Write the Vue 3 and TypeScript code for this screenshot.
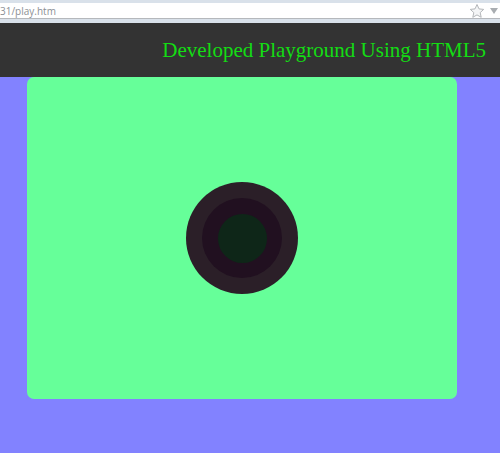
<script setup lang="ts">
const title = 'Developed Playground Using HTML5'
const url = '31/play.htm'
</script>

<template>
  <div class="page">
    <div class="chrome">
      <div class="address">
        <span class="url">{{ url }}</span>
        <span class="tools">
          <svg class="star" width="16" height="16" viewBox="0 0 16 16">
            <path d="M8 1.5l2 4.4 4.7.5-3.5 3.2 1 4.700L8 11.900l-4.200 2.400 1-4.700L1.300 6.400 6 5.900z" fill="#f4f5f6" stroke="#b4b7ba" stroke-width="1" />
          </svg>
          <svg class="caret" width="8" height="6" viewBox="0 0 8 6">
            <path d="M0 0h8L4 6z" fill="#a9adb1" />
          </svg>
        </span>
      </div>
    </div>
    <header class="bar">
      <h1 class="title">{{ title }}</h1>
    </header>
    <main class="stage">
      <div class="field">
        <div class="ring outer">
          <div class="ring middle">
            <div class="ring inner"></div>
          </div>
        </div>
      </div>
    </main>
  </div>
</template>

<style scoped>
.page {
  width: 500px;
  height: 453px;
  display: flex;
  flex-direction: column;
  overflow: hidden;
  background: #8282ff;
}
.chrome {
  height: 23px;
  flex: none;
  background: #d9e1ea;
  box-sizing: border-box;
  padding-top: 3px;
}
.address {
  height: 15px;
  background: #fff;
  border-bottom: 1px solid #b5b8bc;
  display: flex;
  align-items: center;
  justify-content: space-between;
  padding-right: 2px;
}
.url {
  font: 10px "Open Sans", "Liberation Sans", Arial, sans-serif;
  color: #8c9095;
}
.tools {
  display: flex;
  align-items: center;
  gap: 5px;
}
.bar {
  height: 54px;
  flex: none;
  background: #333;
  display: flex;
  justify-content: flex-end;
  align-items: center;
  padding-right: 14px;
  box-sizing: border-box;
}
.title {
  margin: 0;
  font: 400 21px "Liberation Serif", "Times New Roman", serif;
  color: #14dc14;
  white-space: nowrap;
}
.stage {
  flex: 1;
  padding-left: 27px;
}
.field {
  width: 430px;
  height: 322px;
  background: #66ff99;
  border-radius: 7px;
  display: flex;
  align-items: center;
  justify-content: center;
}
.ring {
  border-radius: 50%;
  display: flex;
  align-items: center;
  justify-content: center;
}
.outer {
  width: 112px;
  height: 112px;
  background: #2b1f28;
}
.middle {
  width: 80px;
  height: 80px;
  background: #211020;
}
.inner {
  width: 49px;
  height: 49px;
  background: #0e2618;
}
</style>
